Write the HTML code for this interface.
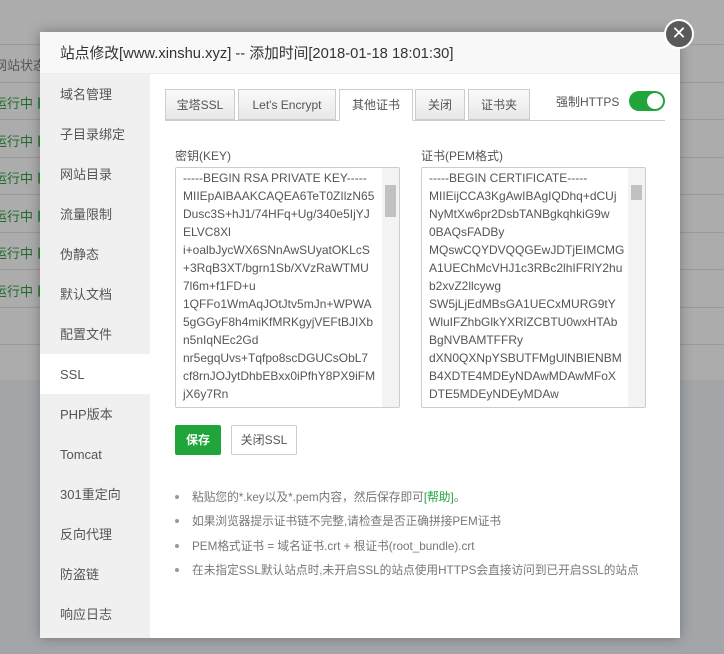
<!DOCTYPE html>
<html><head><meta charset="utf-8"><style>
*{margin:0;padding:0;box-sizing:border-box}
body{width:724px;height:654px;overflow:hidden;position:relative;font-family:"Liberation Sans","Noto Sans CJK SC",sans-serif;background:#a3a6a9}
.bgtop{position:absolute;left:0;top:0;width:724px;height:380px;background:#acacac}
.row{position:absolute;left:0;width:724px;border-top:1px solid #999;height:1px}
.run{position:absolute;left:-6px;font-size:13px;color:#1f6b2e}
.modal{position:absolute;left:40px;top:32px;width:640px;height:606px;background:#fff;box-shadow:0 0 12px rgba(0,0,0,.3)}
.hdr{height:42px;background:#f8f8f8;border-bottom:1px solid #eee;font-size:14.75px;color:#333;padding:10px 0 0 20px}
.nav{position:absolute;left:0;top:42px;width:110px;height:564px;background:#f0f0f0}
.nav div{height:40px;line-height:42px;padding-left:20px;font-size:13px;color:#555}
.nav .on{background:#fff}
.tab{position:absolute;top:57px;height:31px;border:1px solid #ccc;background:linear-gradient(#fafafa,#e8e8e8);font-size:12px;color:#555;text-align:center;line-height:30px}
.tab.on{background:#fff;border-bottom-color:#fff;height:32px}
.ta{position:absolute;top:135px;width:225px;height:241px;border:1px solid #ccc;border-radius:2px;font-size:12px;color:#555;line-height:18px;padding:0 0 0 7px;overflow:hidden;font-family:"Liberation Sans",sans-serif}
.ta .t{padding-top:1px;white-space:nowrap}
.sb{position:absolute;right:0;top:0;width:17px;height:100%;background:#f3f3f3}
.thumb{position:absolute;left:3px;top:17px;width:11px;height:32px;background:#c1c1c1}
.lbl{position:absolute;top:115px;font-size:12px;color:#555}
ul{position:absolute;left:135px;top:456px;list-style:none;font-size:11.7px;color:#777}
li{height:24.3px;position:relative;padding-left:17px}
li:before{content:"";position:absolute;left:0;top:7px;width:4px;height:4px;border-radius:50%;background:#999}
</style></head><body>
<div class="bgtop"></div>
<div class="row" style="top:44px"></div>
<div class="row" style="top:82px"></div>
<div class="row" style="top:119px"></div>
<div class="row" style="top:157px"></div>
<div class="row" style="top:194px"></div>
<div class="row" style="top:232px"></div>
<div class="row" style="top:269px"></div>
<div class="row" style="top:307px"></div>
<div class="row" style="top:344px"></div>
<div class="run" style="top:55px;color:#555">网站状态</div>
<div class="run" style="top:93px">运行中 <span style="color:#2c8a3a">▶</span></div>
<div class="run" style="top:131px">运行中 <span style="color:#2c8a3a">▶</span></div>
<div class="run" style="top:168px">运行中 <span style="color:#2c8a3a">▶</span></div>
<div class="run" style="top:206px">运行中 <span style="color:#2c8a3a">▶</span></div>
<div class="run" style="top:243px">运行中 <span style="color:#2c8a3a">▶</span></div>
<div class="run" style="top:281px">运行中 <span style="color:#2c8a3a">▶</span></div>

<div class="modal">
<div class="hdr">站点修改[www.xinshu.xyz] -- 添加时间[2018-01-18 18:01:30]</div>
<div class="nav">
<div>域名管理</div><div>子目录绑定</div><div>网站目录</div><div>流量限制</div><div>伪静态</div><div>默认文档</div><div>配置文件</div><div class="on">SSL</div><div>PHP版本</div><div>Tomcat</div><div>301重定向</div><div>反向代理</div><div>防盗链</div><div>响应日志</div>
</div>
<div style="position:absolute;left:125px;top:88px;width:500px;border-top:1px solid #ccc"></div>
<div class="tab" style="left:125px;width:70px">宝塔SSL</div>
<div class="tab" style="left:198px;width:98px">Let's Encrypt</div>
<div class="tab on" style="left:299px;width:74px">其他证书</div>
<div class="tab" style="left:375px;width:50px">关闭</div>
<div class="tab" style="left:428px;width:62px">证书夹</div>
<div style="position:absolute;left:516px;top:61px;font-size:12px;color:#555">强制HTTPS</div>
<div style="position:absolute;left:589px;top:59px;width:36px;height:20px;border-radius:10px;background:#20a53a"><div style="position:absolute;right:2px;top:2px;width:16px;height:16px;border-radius:50%;background:#fff"></div></div>

<div class="lbl" style="left:135px">密钥(KEY)</div>
<div class="lbl" style="left:381px">证书(PEM格式)</div>
<div class="ta" style="left:135px"><div class="t">-----BEGIN RSA PRIVATE KEY-----<br>MIIEpAIBAAKCAQEA6TeT0ZIlzN65<br>Dusc3S+hJ1/74HFq+Ug/340e5IjYJ<br>ELVC8Xl<br>i+oalbJycWX6SNnAwSUyatOKLcS<br>+3RqB3XT/bgrn1Sb/XVzRaWTMU<br>7l6m+f1FD+u<br>1QFFo1WmAqJOtJtv5mJn+WPWA<br>5gGGyF8h4miKfMRKgyjVEFtBJIXb<br>n5nIqNEc2Gd<br>nr5egqUvs+Tqfpo8scDGUCsObL7<br>cf8rnJOJytDhbEBxx0iPfhY8PX9iFM<br>jX6y7Rn</div><div class="sb"><div class="thumb"></div></div></div>
<div class="ta" style="left:381px"><div class="t">-----BEGIN CERTIFICATE-----<br>MIIEijCCA3KgAwIBAgIQDhq+dCUj<br>NyMtXw6pr2DsbTANBgkqhkiG9w<br>0BAQsFADBy<br>MQswCQYDVQQGEwJDTjEIMCMG<br>A1UEChMcVHJ1c3RBc2lhIFRlY2hu<br>b2xvZ2llcywg<br>SW5jLjEdMBsGA1UECxMURG9tY<br>WluIFZhbGlkYXRlZCBTU0wxHTAb<br>BgNVBAMTFFRy<br>dXN0QXNpYSBUTFMgUlNBIENBM<br>B4XDTE4MDEyNDAwMDAwMFoX<br>DTE5MDEyNDEyMDAw</div><div class="sb"><div class="thumb" style="height:15px"></div></div></div>

<div style="position:absolute;left:135px;top:393px;width:46px;height:30px;background:#20a53a;border-radius:2px;color:#fff;font-size:12px;font-weight:bold;text-align:center;line-height:30px">保存</div>
<div style="position:absolute;left:191px;top:393px;width:66px;height:30px;border:1px solid #ccc;border-radius:2px;color:#555;font-size:12px;text-align:center;line-height:28px">关闭SSL</div>
<ul>
<li>粘贴您的*.key以及*.pem内容，然后保存即可<span style="color:#20a53a">[帮助]</span>。</li>
<li>如果浏览器提示证书链不完整,请检查是否正确拼接PEM证书</li>
<li>PEM格式证书 = 域名证书.crt + 根证书(root_bundle).crt</li>
<li>在未指定SSL默认站点时,未开启SSL的站点使用HTTPS会直接访问到已开启SSL的站点</li>
</ul>
</div>
<div style="position:absolute;left:664px;top:19px;width:30px;height:30px;border-radius:50%;background:#5a5a5a;border:2px solid #fff;color:#fff;font-size:18px;line-height:26px;text-align:center;font-family:'DejaVu Sans',sans-serif">✕</div>
</body></html>
